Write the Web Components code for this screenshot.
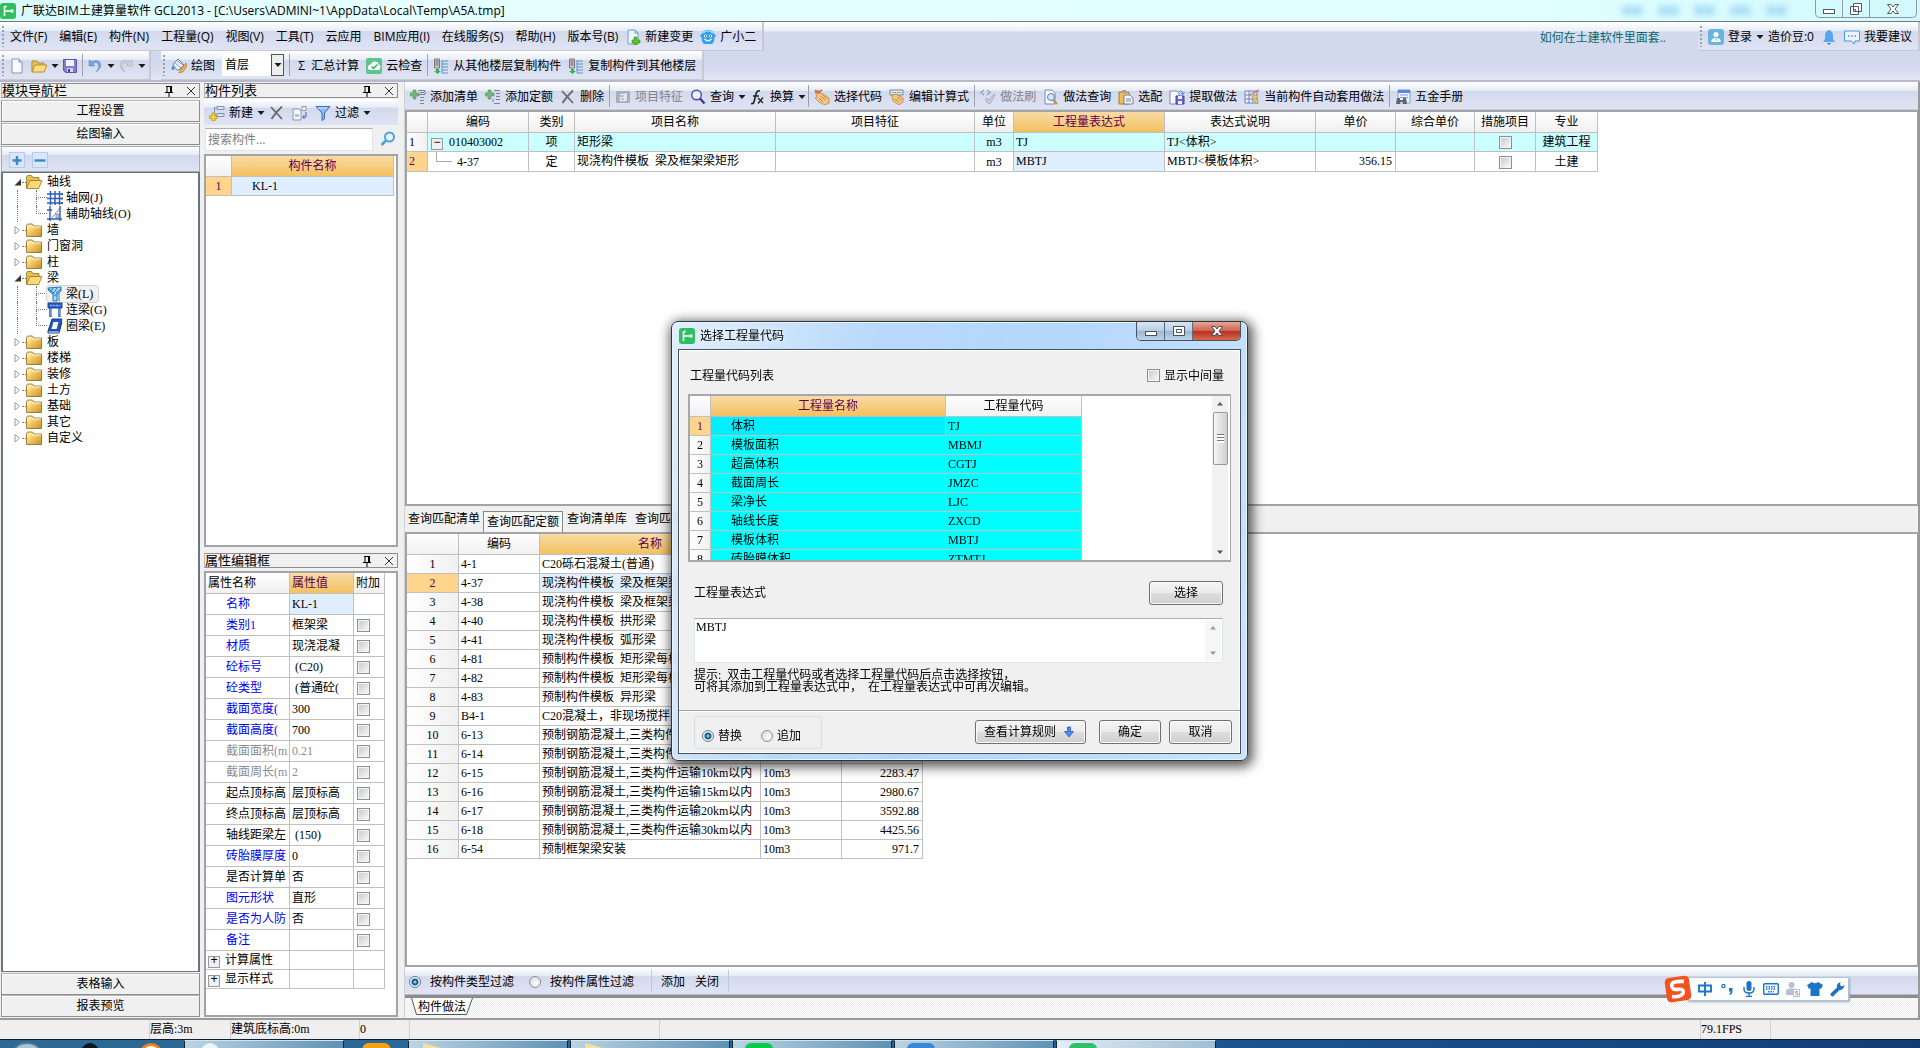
<!DOCTYPE html>
<html lang="zh-CN">
<head>
<meta charset="utf-8">
<title>广联达BIM土建算量软件 GCL2013</title>
<style>
  html, body { margin: 0; height: 100%; }
  body {
    --ui: "Open Sans", "Noto Sans CJK SC", sans-serif;
    --song: "Liberation Serif", "Noto Sans CJK SC", sans-serif;
    --strip: linear-gradient(#ffffff 0, #e6ecf6 32%, #d3d9ec 34%, #dfe4f5 100%);
    --line: #c0c0c0;
    --dark: #8a8a8a;
    font: 12px/16px var(--song);
    color: #000;
    overflow: hidden;
  }
</style>
</head>
<body>
<gcl-app></gcl-app>
<script>
const RESET = `
  *, *::before, *::after { box-sizing: border-box; }
  :host { box-sizing: border-box; }
  button, input, select, textarea { font: inherit; color: inherit; margin: 0; }
  button { background: none; border: 0; padding: 0; white-space: nowrap; }
  input[type=checkbox] { appearance: none; width: 13px; height: 13px; flex: none; border: 1px solid #8e8f8f;
    background: linear-gradient(135deg, #c9cdd2, #f6f6f6) content-box, #f4f4f4; padding: 1px; vertical-align: middle; }
  input[type=radio] { appearance: none; width: 12px; height: 12px; flex: none; border: 1px solid #8e8f8f; border-radius: 50%;
    background: radial-gradient(circle at 65% 65%, #fdfdfd, #cfd3d8); }
  input[type=radio]:checked { background: radial-gradient(circle, #6fd0f5 0 1px, #14608f 2px 3px, #eef2f5 4px); border-color: #6b7a86; }
`;
function element(name, css, view) {
  customElements.define(name, class extends HTMLElement {
    connectedCallback() {
      if (this.shadowRoot) return;
      const t = document.createElement('template');
      t.innerHTML = `<style>${RESET}${css}</style>` + (typeof view === 'function' ? view(this) : view);
      this.attachShadow({ mode: 'open' }).append(t.content.cloneNode(true));
    }
  });
}

/* ---------- icons, all on a 16 x 16 board ---------- */
const ICONS = {
  logo: '<rect width="16" height="16" rx="3" fill="#2fbf5f"/><path d="M4.500 3v10M4.500 8h7M4.500 4.500l2-1.500" stroke="#fff" stroke-width="1.600" fill="none"/><rect x="10.500" y="6.500" width="3" height="3" fill="#fff"/>',
  docplus: '<path d="M3 1h7l3 3v11H3z" fill="#eaf5ff" stroke="#6f9cc8"/><path d="M10 1v3h3" fill="none" stroke="#6f9cc8"/><path d="M9 8h3v3h3v3h-3v2H9v-2H7v-3h2z" fill="#5fc02c" stroke="#3c8f14" stroke-width=".6"/>',
  mascot: '<path d="M8 1q5 0 6 4l2 1-1.500 3Q14 15 11 15H5Q2 15 1.500 9L0 6l2-1q1-4 6-4z" fill="#35a0ea"/><path d="M3 4q5-4 10 0" stroke="#a4e2ff" stroke-width="1.200" fill="none"/><circle cx="5.500" cy="7" r="1.500" fill="#fff"/><circle cx="10.500" cy="7" r="1.500" fill="#fff"/><circle cx="5.700" cy="7" r=".7" fill="#124"/><circle cx="10.300" cy="7" r=".7" fill="#124"/><path d="M4.500 10q3.500 3.500 7 0" fill="none" stroke="#fff" stroke-width="1.200"/>',
  login: '<rect width="16" height="16" rx="3" fill="#6bb4dc"/><circle cx="8" cy="5.500" r="2.500" fill="#fff"/><path d="M3.500 13v-2q1-2 4.500-2t4.500 2v2z" fill="#fff"/><path d="M8 9l1.500 2L8 12z" fill="#6bb4dc"/>',
  bell: '<path d="M8 1q4 1 4 6v3l2 3H2l2-3V7q0-5 4-6z" fill="#5aa5f2"/><path d="M6 14h4q-2 3-4 0z" fill="#2c77c8"/>',
  bubble: '<path d="M.5 2h15v10h-4.500l-1 3-2.500-3h-7z" fill="#eaf4ff" stroke="#4f93dc"/><path d="M4 7h1.500M7.200 7h1.500M10.500 7H12" stroke="#4f93dc" stroke-width="1.500"/>',
  newdoc: '<path d="M3 1h7l3 3v11H3z" fill="#f8fbff" stroke="#8a94a8"/><path d="M10 1v3h3" fill="#d6e0f0" stroke="#8a94a8"/>',
  open: '<path d="M1 14V3h5l1 2h6v3" fill="#e9c060" stroke="#b98a28"/><path d="M1 14l3-7h12l-3 7z" fill="#ffdf82" stroke="#b98a28"/>',
  save: '<path d="M1.500 1.500h13v13h-11l-2-2z" fill="#8080d0" stroke="#5858a8"/><rect x="4" y="2" width="8" height="6" fill="#f4f4ff"/><path d="M5 10h6v4H5z" fill="#d4d4ea"/><path d="M6 11h2v3H6z" fill="#444490"/>',
  undo: '<path d="M2 2v6h6L5.800 6q4-3 5.500.5T9 14q6-4 4.500-8.500T5 3.500z" fill="#7aa2de" stroke="#5a80c0" stroke-width=".5"/>',
  redo: '<path d="M14 2v6H8l2.200-2q-4-3-5.500.5T7 14Q1 10 2.500 5.500T11 3.500z" fill="#d0d3da" stroke="#a4a8b4" stroke-width=".6"/>',
  paint: '<path d="M2 6l5-5 6 6-5 5q-3 1-6-6z" fill="#e8edf4" stroke="#6c7c98"/><path d="M4 5l6 5M6 3l6 4" stroke="#7ea4d6"/><path d="M15 5l-5 6-2 4 4-1 4-6z" fill="#e5b04a" stroke="#a87820" stroke-width=".6"/><path d="M1 8q-1 4 1 4t1-3" fill="#4d86d0"/>',
  cloud: '<rect width="16" height="16" rx="2" fill="#5dc48c"/><path d="M4 12q-3-1-2-3.500t3-2q1-3 4-3t3.500 3q2.500.5 2 3T12 12z" fill="#fff"/><path d="M5.500 8.500l2 2 4-4" stroke="#39a86c" stroke-width="1.500" fill="none"/>',
  copyfloor: '<path d="M1.500 1h5v9h-5z" fill="#d5d5d5" stroke="#777"/><path d="M2.500 3h3M2.500 5h3M2.500 7h3" stroke="#555"/><path d="M9 2v13M9 3h6M9 6h6M9 9h6M9 12h6M9 15h6" stroke="#5d92cc"/><path d="M3 11h3v2h2l-3.500 3L1 13h2z" fill="#34b554"/>',
  add1: '<path d="M3 1h3v3h3v3H6v3H3V7H0V4h3z" fill="#73b878" stroke="#4c8e52" stroke-width=".5"/><path d="M8 1.500h7v4H8M10 3.500h4M10 8.500h4M10 11.500h4M10 14.500h4" stroke="#7d8590" fill="none"/>',
  add2: '<path d="M3 1h3v3h3v3H6v3H3V7H0V4h3z" fill="#73b878" stroke="#4c8e52" stroke-width=".5"/><path d="M9 1.500h6M11 4.500h4M11 7.500h4M11 10.500h4M9 14.500h6M8 13v-3" stroke="#7d8590" fill="none"/>',
  del: '<path d="M2 2l11 12M13 1.500Q7 7 2.500 14" stroke="#6a6a6a" stroke-width="1.800" fill="none"/>',
  feature: '<rect x="1" y="2" width="14" height="12" rx="1" fill="#a8adb9"/><path d="M5 5.500h4.500v6H5.500V8.500h4M11 4v8" stroke="#e8eaf0" stroke-width="1.500" fill="none"/>',
  search: '<circle cx="6.500" cy="6" r="4.800" fill="#eef3ff" stroke="#4a4aa8" stroke-width="1.400"/><path d="M10 9.500l4.500 5" stroke="#3c3c94" stroke-width="2.400"/>',
  fx: '<path d="M10 2q-3-1-4 3l-2 8q-.5 2-3 1.500M3 7h6" stroke="#222" fill="none" stroke-width="1.600"/><path d="M8 9l5 5M13 8.500l-5 6" stroke="#222" stroke-width="1.300"/>',
  hand: '<path d="M1 2l3-1 1 3 4 1 6 4v5l-4 2-6-3-4-4 2-1z" fill="#f2c684" stroke="#b07a30" stroke-width=".7"/><path d="M5 9l4 4M7 7l4 4M9 6l4 4" stroke="#b07a30" stroke-width=".8"/><path d="M1 1l3 3 4-3" stroke="#e05a4a" stroke-width="1.600" fill="none"/>',
  handcalc: '<path d="M1 1h13v5H1z" fill="#e4e8f0" stroke="#7a8296"/><path d="M3 3.500h9" stroke="#7a8296" stroke-dasharray="1.500 1"/><path d="M3 6l4-1 7 4v4l-4 3-6-4z" fill="#f2c684" stroke="#b07a30" stroke-width=".7"/><path d="M6 10l4 3M8 8l4 3" stroke="#b07a30" stroke-width=".8"/>',
  brush: '<path d="M4 1L1 3.500 4 6M7 1l3 2.500L7 6" fill="none" stroke="#9aa0ac" stroke-width="1.300"/><path d="M14 5l-5 6-3-2v4l4 2 5-9z" fill="#c9ccd4" stroke="#9aa0ac" stroke-width=".7"/>',
  docfind: '<path d="M2 1h7l3 3v11H2z" fill="#f6f9ff" stroke="#7b8aa8"/><circle cx="8" cy="8" r="3.500" fill="#cfe6fb" stroke="#5580b8"/><path d="M10 11l4 4" stroke="#d08838" stroke-width="2"/>',
  clip: '<path d="M1 3h10v12H1z" fill="#efbc55" stroke="#aa7a1c"/><path d="M4 1h4v3H4z" fill="#9aa0ac"/><path d="M6 6h6l3 3v6H6z" fill="#f8faff" stroke="#7080a0"/><path d="M8 10h5M8 12h5" stroke="#7080a0"/>',
  extract: '<path d="M1 2h7l2 2v11H1z" fill="#f6f9ff" stroke="#7b8aa8"/><path d="M7 7h8v8H7z" fill="#6868c8" stroke="#44449c"/><path d="M9 7h4v3H9zM9 12h4v3H9z" fill="#eef"/><path d="M10 3q3-3 4 2M12 4l2 1.500L15.500 3" stroke="#4d86d0" fill="none"/>',
  autogrid: '<path d="M1 2h12v12H1zM1 6h12M1 10h12M5 2v12M9 2v12" fill="#eef2ff" stroke="#6b80c4"/><path d="M6 5l2-1 6 8v3l-2-1z" fill="#f1cd62" stroke="#a8801c" stroke-width=".6"/><path d="M10 4l5-3" stroke="#e05a4a" stroke-width="1.400"/>',
  manual: '<path d="M3 1h12v13H3z" fill="#eef4ff" stroke="#88a0d0"/><path d="M3 1h12v3H3z" fill="#5b88e0"/><path d="M5 6h8M5 8.500h8" stroke="#88a0d0"/><path d="M2 9h3v2h3V9h3l1 6H8v-2H5v2H1z" fill="#5a6672"/>',
  newitem: '<path d="M8 1.500h7v3H8zM8 8.500h7v3H8z" fill="#dde5f2" stroke="#7d93b4"/><path d="M5.500 2v8M5.500 3H8M5.500 10H8" stroke="#7d93b4"/><path d="M3 8h3v3h2v2.500H6V16H3v-2.500H0V11h3z" fill="#f5d548" stroke="#b08a10" stroke-width=".7"/>',
  copyto: '<path d="M1 4h6l2 2v9H1z" fill="#f4f7fb" stroke="#8a96ac"/><path d="M3 9h4v3H3z" fill="#b8c0d0"/><path d="M10 1.500h4v4h-4z" fill="#f4f7fb" stroke="#8a96ac"/><path d="M14 7v5h-3M12.500 10L10.500 12l2 2" stroke="#4a5cb8" fill="none"/>',
  filter: '<path d="M1 1.500h14L9.500 8v6L7 15.500V8z" fill="#8cb8f0" stroke="#3f6cc0"/><path d="M3 3h9" stroke="#d6e8ff"/>',
  find: '<circle cx="9.500" cy="6" r="4.500" fill="none" stroke="#4aa3dc" stroke-width="2"/><path d="M6 9.500L1.500 14" stroke="#4aa3dc" stroke-width="2.600"/>',
  plus: '<rect x=".5" y=".5" width="15" height="15" fill="#d9e6fb" stroke="#b7caec"/><path d="M8 4v9M3.500 8.500h9" stroke="#3a8ac8" stroke-width="2.400"/>',
  minus: '<rect x=".5" y=".5" width="15" height="15" fill="#d9e6fb" stroke="#b7caec"/><path d="M2.500 8.500h11" stroke="#3a8ac8" stroke-width="2.400"/>',
  folder: '<path d="M.5 14.500v-11l1-1.500h5l1.500 2h7.500v10.500z" fill="url(#fg)" stroke="#8a6a1c" stroke-width=".8"/><path d="M1 5h14" stroke="#fff2b8"/><defs><linearGradient id="fg" x2="1" y2="1"><stop offset=".2" stop-color="#ffe596"/><stop offset="1" stop-color="#cf8c18"/></linearGradient></defs>',
  folderopen: '<path d="M.5 14V3l1-1.500h4L7 3.500h6V7" fill="#e8bd52" stroke="#94701c" stroke-width=".8"/><path d="M.5 14.500L4 6.500h12l-3.500 8z" fill="#ffdb78" stroke="#94701c" stroke-width=".8"/>',
  axisgrid: '<path d="M3.500 1v14M8 1v14M12.500 1v14M0 4h14M0 8.500h14M0 13h14" stroke="#2c5fc0" stroke-width="1.500"/><path d="M14 3h2v2h-2zM14 7.500h2v2h-2zM14 12h2v2h-2z" fill="#2c5fc0"/>',
  axisaux: '<path d="M3 0v15M13 0v15M0 4h5M0 13h15" stroke="#2c5fc0" stroke-width="1.400"/><path d="M4 13L14 1" stroke="#2c5fc0" stroke-dasharray="2 1"/><path d="M9 8h3v4H9z" fill="#c8cede" stroke="#5a6a90" stroke-width=".7"/>',
  beam: '<path d="M1 2l13-1v4l-4 3v7H6V8L2 5z" fill="#a9d4f4" stroke="#2277bb"/><path d="M2 3l5 5M6 2l-2 4M10 2L6 8M14 3l-5 4M7 10l3-2M12 7v8" stroke="#2277bb"/>',
  linkbeam: '<path d="M1 1h14v5H1z" fill="#2f62c4" stroke="#1c3f94"/><path d="M3 3.500h10" stroke="#9cc0f4" stroke-dasharray="2 1"/><path d="M3.500 6v9M12.500 6v9" stroke="#2f62c4" stroke-width="2.600"/><path d="M4 7v7M13 7v7" stroke="#a9c6f2"/>',
  ringbeam: '<path d="M5 1h10l-3 12H1z" fill="#2458c0" stroke="#163c90"/><path d="M6.500 4h5l-2 7h-5z" fill="#fff"/><path d="M1 13v2h11l3-11" fill="none" stroke="#163c90"/>',
  pin: '<path d="M5 3.500h6M6 3v6M9.500 3v6M10.500 3v6M4 9.500h8M8 10v4" stroke="#000" fill="none"/>',
  close: '<path d="M4 4l8 8M12 4l-8 8" stroke="#333"/>',
  caret: '<path d="M4.500 6h7L8 10z" fill="#1a1a1a"/>',
  up: '<path d="M5 9.500h6L8 6z" fill="#555"/>',
  down: '<path d="M5 6.500h6L8 10z" fill="#555"/>',
  arrowblue: '<path d="M6.500 3h3v4.500h3L8 13 3.500 7.500h3z" fill="#4a8cf0" stroke="#2a56b8" stroke-width=".8"/>',
  sogou: '<g transform="rotate(-8 8 8)"><rect x="1" y="1" width="14" height="14" rx="2.500" fill="#f4511c"/><path d="M12 4.200Q5 2.800 4.700 5.500T8 8.200t2.500 2.600Q9 13 4 11.800" stroke="#fff" stroke-width="2.100" fill="none"/></g>',
  zhong: '<path d="M2 4.500h12v6H2zM8 1v14" stroke="#1d74c4" stroke-width="1.900" fill="none"/>',
  punct: '<circle cx="4.500" cy="5" r="1.600" fill="none" stroke="#1d74c4" stroke-width="1.200"/><path d="M10 7h3.500v3q0 3-3 4v-1.500q1.500-1 1.300-2H10z" fill="#1d74c4"/>',
  mic: '<rect x="5.500" y="0" width="5" height="10" rx="2.500" fill="#1d74c4"/><path d="M3 6v2q0 4 5 4t5-4V6M8 12v4M5 15.500h6" stroke="#1d74c4" stroke-width="1.400" fill="none"/>',
  keys: '<rect x=".7" y="2.700" width="14.600" height="10.600" rx="1" fill="none" stroke="#1d74c4" stroke-width="1.400"/><path d="M3 5.700h10M3 8h10M5 10.800h6" stroke="#1d74c4" stroke-width="1.500" stroke-dasharray="1.500 1"/>',
  person: '<circle cx="6.500" cy="4" r="3" fill="#b9c0d4"/><path d="M1 14V9l3-1.500h5L12 9v5z" fill="#b9c0d4"/><rect x="8.500" y="8.500" width="6" height="7" fill="#fff" stroke="#b9c0d4"/><path d="M13 10.500h-2.500v1.500H13v2h-2.500" stroke="#9ca6c0" fill="none"/>',
  shirt: '<path d="M5 1q3 2.500 6 0l5 3-2 4-1.500-.8V15h-9V7.200L2 8 0 4z" fill="#1d74c4"/>',
  wrench: '<path d="M1.500 12.500L8 6.500Q7 2.500 11.500 1L11 4l2 1.500L15.500 4Q15 9 10.500 9l-6.500 6.500Q1 15 1.500 12.500z" fill="#1d74c4"/>'
};
element('gcl-icon', `
  :host { display: inline-block; width: 16px; height: 16px; flex: none; }
  :host([small]) { width: 8px; height: 8px; }
  :host([large]) { width: 28px; height: 28px; }
  svg { display: block; width: 100%; height: 100%; }
`, h => `<svg viewBox="${h.hasAttribute('small') ? '4 4 8 8' : '0 0 16 16'}" aria-hidden="true">${ICONS[h.getAttribute('name')]}</svg>`);

/* ---------- tool strips ---------- */
element('tool-strip', `
  :host { display: flex; align-items: center; gap: 7px; padding: 0 6px; background: var(--strip); font-family: var(--ui); }
  :host([grip])::before { content: ""; width: 2px; height: 21px; margin-left: -4px; margin-right: -1px;
    background: repeating-linear-gradient(#9aa0b0 0 2px, transparent 2px 4px); }
`, '<slot></slot>');
element('tool-sep', ':host { display: block; width: 1px; height: 22px; background: #9a9eae; margin: 0 -2px; }', '');
element('tool-item', `
  :host { display: block; flex: none; }
  :host([off]) { color: #82838c; }
  :host([drop]) { margin-right: -3px; }
  button { display: flex; align-items: center; gap: 4px; height: 20px; margin-top: 2px; }
`, h => `<button type="button" ${h.hasAttribute('off') ? 'disabled style="color:inherit"' : ''} aria-label="${h.getAttribute('label') || h.textContent.trim()}">
  ${h.getAttribute('icon') ? `<gcl-icon name="${h.getAttribute('icon')}"></gcl-icon>` : ''}
  <slot></slot>${h.hasAttribute('drop') ? '<gcl-icon name="caret" small></gcl-icon>' : ''}</button>`);

/* ---------- title bar ---------- */
element('window-title', `
  :host { display: flex; align-items: stretch; height: 22px; background: linear-gradient(90deg, #d8fbfd, #e6ffff 20%, #e0ffff 80%, #d2f9fd);
    border-bottom: 1px solid #77797c; font-family: var(--ui); }
  .name { display: flex; align-items: center; gap: 5px; flex: 1; }
  .ghost { display: flex; align-items: center; gap: 15px; margin-right: 28px; filter: blur(3px); }
  .ghost i { width: 21px; height: 9px; background: #a9dcf6; }
  .ctl { display: flex; height: 18px; margin-right: 3px; border: 1px solid #8b9ba0; border-top: 0; border-radius: 0 0 5px 5px; }
  .ctl button { width: 27px; display: grid; place-items: center; border-right: 1px solid #8b9ba0; }
  .ctl button:last-child { width: 46px; border: 0; }
  svg { width: 14px; height: 14px; fill: #fff; stroke: #4e5a60; }
`, `<div class="name"><gcl-icon name="logo"></gcl-icon><slot></slot></div>
  <div class="ghost" aria-hidden="true"><i></i><i></i><i></i><i></i><i></i></div>
  <div class="ctl">
    <button aria-label="最小化"><svg viewBox="0 0 14 14"><rect x="1.500" y="7.500" width="11" height="4"/></svg></button>
    <button aria-label="还原"><svg viewBox="0 0 14 14"><path d="M4.500 1.500h8v8h-8zM1.500 4.500h8v8h-8z"/><path d="M4.500 7.500h2v2h-2z"/></svg></button>
    <button aria-label="关闭"><svg viewBox="0 0 14 14"><path d="M1.500 2.500h3.500l2 2.500 2-2.500h3.500L9 7l3.500 4.500H9L7 9l-2 2.500H1.500L5 7z"/></svg></button>
  </div>`);

/* ---------- menu and main tools ---------- */
element('menu-area', `
  :host { display: block; background: linear-gradient(#fff 0, #e9eef6 9px, #d3d9ec 10px, #d3d9ec 45px, #e1e6f5 100%); border-bottom: 2px solid #b6b9cd; font-family: var(--ui); }
  .row { display: flex; height: 29px; align-items: stretch; }
  tool-strip { border-right: 2px solid #c8c9d0; border-bottom: 1px solid #c8c9d0; }
  tool-strip.file { gap: 6px; }
  nav { display: flex; gap: 12px; }
  .grow { flex: 1; }
  a { align-self: center; color: #0b6b70; text-decoration: none; margin-right: 32px; padding-top: 2px; }
  .pick { display: grid; width: 62px; height: 22px; background: #fff; }
  .pick > * { grid-area: 1/1; }
  select { appearance: none; border: 0; background: none; padding: 0 3px; border-radius: 0; width: 100%; }
  .pick span { justify-self: end; width: 13px; border: 1px solid #555; background: #eee; display: grid; place-items: center; pointer-events: none; }
`, `<div class="row">
    <tool-strip grip>
      <nav>${['文件(F)', '编辑(E)', '构件(N)', '工程量(Q)', '视图(V)', '工具(T)', '云应用', 'BIM应用(I)', '在线服务(S)', '帮助(H)', '版本号(B)'].map(t => `<tool-item>${t}</tool-item>`).join('')}</nav>
      <tool-item icon="docplus">新建变更</tool-item><tool-item icon="mascot">广小二</tool-item>
    </tool-strip>
    <div class="grow"></div>
    <a href="#help">如何在土建软件里面套..</a>
    <tool-strip grip>
      <tool-item icon="login" drop>登录</tool-item><tool-item>造价豆:0</tool-item>
      <tool-item icon="bell" label="消息"></tool-item><tool-item icon="bubble">我要建议</tool-item>
    </tool-strip>
  </div>
  <div class="row">
    <tool-strip grip class="file">
      <tool-item icon="newdoc" label="新建"></tool-item><tool-item icon="open" label="打开" drop></tool-item>
      <tool-item icon="save" label="保存"></tool-item><tool-sep></tool-sep>
      <tool-item icon="undo" label="撤销" drop></tool-item><tool-item icon="redo" label="恢复" drop off></tool-item>
    </tool-strip>
    <tool-strip grip style="margin-left:10px">
      <tool-item icon="paint">绘图</tool-item>
      <label class="pick"><select aria-label="楼层"><option>首层</option></select><span><gcl-icon name="caret" small></gcl-icon></span></label>
      <tool-sep></tool-sep>
      <tool-item>&nbsp;Σ&nbsp; 汇总计算</tool-item><tool-item icon="cloud">云检查</tool-item><tool-sep></tool-sep>
      <tool-item icon="copyfloor">从其他楼层复制构件</tool-item><tool-item icon="copyfloor">复制构件到其他楼层</tool-item>
    </tool-strip>
  </div>`);

/* ---------- dock caption and wide buttons ---------- */
element('dock-caption', `
  :host { display: flex; align-items: center; height: 15px; border: 1px solid #8d8d8d; border-left-color: #b9b9b9; background: #f0f0f0; font-size: 13px; line-height: 13px; flex: none; }
  span { flex: 1; white-space: nowrap; }
  button { width: 16px; height: 13px; margin-right: 6px; overflow: hidden; }
  button:last-child { margin-right: 0; }
  gcl-icon { display: block; margin-top: -1px; }
`, '<span><slot></slot></span><button aria-label="固定"><gcl-icon name="pin"></gcl-icon></button><button aria-label="关闭"><gcl-icon name="close"></gcl-icon></button>');
element('nav-button', `
  :host { display: block; flex: none; height: 22px; }
  button { width: 100%; height: 100%; background: #f0f0f0; border: 1px solid #8e8e8e; border-top-color: #b5b5b5; box-shadow: inset 1px 1px #fff; }
`, '<button type="button"><slot></slot></button>');

/* ---------- navigation tree ---------- */
element('tree-node', `
  :host { display: flex; align-items: center; height: 16px; padding-left: 10px; white-space: nowrap; }
  svg { width: 9px; height: 10px; flex: none; }
  .dots { width: 4px; border-top: 1px dotted #777; }
  .label { padding-left: 5px; }
  .g { width: 19px; height: 16px; border-left: 1px dotted #777; margin-left: 4px; }
  .e { width: 11px; height: 16px; flex: none; display: grid; grid-template-rows: 8px 8px; }
  .e i { border-left: 1px dotted #777; }
  .e i:first-child { border-bottom: 1px dotted #777; }
  :host([last]) .e i:last-child { border: 0; }
  .leaf { display: flex; align-items: center; height: 16px; padding-right: 5px; border-radius: 3px; }
  :host([current]) .leaf { background: #f1f1f1; box-shadow: 0 0 0 1px #d5d5d5; }
`, h => h.hasAttribute('leaf')
  ? `<span class="g"></span><span class="e"><i></i><i></i></span><span class="leaf"><gcl-icon name="${h.getAttribute('leaf')}"></gcl-icon><span class="label" style="padding-left:3px"><slot></slot></span></span>`
  : `<svg viewBox="0 0 9 10">${h.hasAttribute('open') ? '<path d="M8 2v6.500H1.500z" fill="#333"/>' : '<path d="M2 1.500v7.500L6.500 5z" fill="#fff" stroke="#999"/>'}</svg>
     <span class="dots"></span><gcl-icon name="${h.hasAttribute('open') ? 'folderopen' : 'folder'}"></gcl-icon><span class="label"><slot></slot></span>`);
element('module-nav', `
  :host { display: flex; flex-direction: column; width: 200px; flex: none; padding: 1px 0 1px 1px; }
  nav-button { margin-top: 1px; }
  .first { margin-top: 2px; }
  .last { margin-top: 0; }
  tool-strip { height: 26px; margin-top: 1px; border: 1px solid #a9a9a9; padding-left: 7px; }
  .tree { flex: 1; background: #fff; border: 1px solid #6c7480; border-width: 1px 2px 1px 2px; padding-top: 1px; overflow: hidden; }
`, `<dock-caption>模块导航栏</dock-caption>
  <nav-button class="first">工程设置</nav-button><nav-button>绘图输入</nav-button>
  <tool-strip><tool-item icon="plus" label="展开"></tool-item><tool-item icon="minus" label="折叠"></tool-item></tool-strip>
  <div class="tree" role="tree">
    <tree-node open>轴线</tree-node><tree-node leaf="axisgrid">轴网(J)</tree-node><tree-node leaf="axisaux" last>辅助轴线(O)</tree-node>
    <tree-node>墙</tree-node><tree-node>门窗洞</tree-node><tree-node>柱</tree-node>
    <tree-node open>梁</tree-node><tree-node leaf="beam" current>梁(L)</tree-node><tree-node leaf="linkbeam">连梁(G)</tree-node><tree-node leaf="ringbeam" last>圈梁(E)</tree-node>
    ${['板', '楼梯', '装修', '土方', '基础', '其它', '自定义'].map(t => `<tree-node>${t}</tree-node>`).join('')}
  </div>
  <nav-button>表格输入</nav-button><nav-button class="last">报表预览</nav-button>`);

/* ---------- data grids ---------- */
const c = (t, k = '') => ({ t, k });
const esc = s => s.replace(/</g, '&lt;');
const tick = name => ({ html: `<input type="checkbox" aria-label="${name}">`, k: 'mid' });
const carry = '预制钢筋混凝土,三类构件运输';
const quota = [
  ['4-1', 'C20砾石混凝土(普通)', '10m3', '2206.35'], ['4-37', '现浇构件模板  梁及框架梁矩形', 'm3', '356.15'],
  ['4-38', '现浇构件模板  梁及框架梁异形', 'm3', '402.18'], ['4-40', '现浇构件模板  拱形梁', 'm3', '618.40'],
  ['4-41', '现浇构件模板  弧形梁', 'm3', '571.26'], ['4-81', '预制构件模板  矩形梁每根', 'm3', '188.72'],
  ['4-82', '预制构件模板  矩形梁每根', 'm3', '171.05'], ['4-83', '预制构件模板  异形梁', 'm3', '214.33'],
  ['B4-1', 'C20混凝土，非现场搅拌', 'm3', '298.50'], ['6-13', carry + '1km以内', '10m3', '1209.82'],
  ['6-14', carry + '5km以内', '10m3', '1690.05'], ['6-15', carry + '10km以内', '10m3', '2283.47'],
  ['6-16', carry + '15km以内', '10m3', '2980.67'], ['6-17', carry + '20km以内', '10m3', '3592.88'],
  ['6-18', carry + '30km以内', '10m3', '4425.56'], ['6-54', '预制框架梁安装', '10m3', '971.7']
];
const codes = [['体积', 'TJ'], ['模板面积', 'MBMJ'], ['超高体积', 'CGTJ'], ['截面周长', 'JMZC'], ['梁净长', 'LJC'], ['轴线长度', 'ZXCD'], ['模板体积', 'MBTJ'], ['砖胎膜体积', 'ZTMTJ']];
const props = [
  ['名称', 'KL-1', 'b', 1], ['类别1', '框架梁', 'b'], ['材质', '现浇混凝', 'b'], ['砼标号', ' (C20)', 'b'], ['砼类型', ' (普通砼(', 'b'],
  ['截面宽度(', '300', 'b'], ['截面高度(', '700', 'b'], ['截面面积(m', '0.21', 'g'], ['截面周长(m', '2', 'g'],
  ['起点顶标高', '层顶标高', ''], ['终点顶标高', '层顶标高', ''], ['轴线距梁左', ' (150)', ''], ['砖胎膜厚度', '0', 'b'],
  ['是否计算单', '否', ''], ['图元形状', '直形', 'b'], ['是否为人防', '否', 'b'], ['备注', '', 'b']
];
const GRIDS = {
  works: {
    w: [21, 101, 46, 201, 199, 39, 151, 151, 80, 79, 61, 62], hot: 6,
    head: ['', '编码', '类别', '项目名称', '项目特征', '单位', '工程量表达式', '表达式说明', '单价', '综合单价', '措施项目', '专业'],
    rows: [
      { k: 'aqua', cells: [c('1', 'no left'), { html: '<span class="box">−</span>010403002', k: 'code' }, c('项', 'mid'), c('矩形梁'), c(''), c('m3', 'mid'), c('TJ'), c('TJ<体积>'), c(''), c(''), tick('措施项目 1'), c('建筑工程', 'mid')] },
      { cells: [c('2', 'no left cur'), { html: '<span class="branch"></span>4-37', k: 'code' }, c('定', 'mid'), c('现浇构件模板  梁及框架梁矩形'), c(''), c('m3', 'mid'), c('MBTJ', 'sel'), c('MBTJ<模板体积>'), c('356.15', 'num'), c(''), tick('措施项目 2'), c('土建', 'mid')] }
    ]
  },
  quota: {
    w: [52, 81, 221, 81, 81], hot: 2, head: ['', '编码', '名称', '单位', '单价'],
    rows: quota.map((r, i) => ({ cells: [c(String(i + 1), 'no' + (i === 1 ? ' cur' : '')), c(r[0]), c(r[1], i === 1 ? 'sel' : ''), c(r[2]), c(r[3], 'num')] }))
  },
  members: { w: [26, 162], hot: 1, head: ['', '构件名称'], rows: [{ cells: [c('1', 'no cur'), c('KL-1', 'sel in')] }] },
  codes: {
    w: [21, 235, 136], hot: 1, head: ['', '工程量名称', '工程量代码'],
    rows: codes.map((r, i) => ({ k: 'cyan', cells: [c(String(i + 1), 'no' + (i ? '' : ' cur')), c(r[0], 'in' + (i ? '' : ' first')), c(r[1])] }))
  },
  props: {
    w: [84, 64, 31], hot: 1, leftHead: true, head: ['属性名称', '属性值', '附加'],
    rows: props.map(p => ({ k: 'tall', cells: [c(p[0], 'in ' + p[2]), c(p[1], (p[3] ? 'sel ' : '') + (p[2] === 'g' ? 'g' : '')), p[3] ? c('') : tick('附加 ' + p[0])] }))
      .concat(['计算属性', '显示样式'].map(t => ({ cells: [{ html: `<span class="box">+</span>${t}`, k: 'group' }, c(''), c('')] })))
  }
};
element('data-grid', `
  :host { display: block; }
  table { table-layout: fixed; border-collapse: separate; border-spacing: 0; }
  th, td { border: solid var(--line); border-width: 0 1px 1px 0; overflow: hidden; white-space: nowrap; font-weight: 400; padding: 0; line-height: 17px; }
  th { height: 21px; background: linear-gradient(#fff, #f0f0f0); text-align: center; }
  th.hot { background: linear-gradient(#f9dba4, #f2c161); color: #5c0050; }
  table.lh th { text-align: left; padding-left: 2px; }
  td { height: 19px; text-align: left; padding-left: 2px; background: #fff; white-space: pre; }
  tr.tall td { height: 21px; }
  tr.aqua td { background: #ccffff; }
  tr.cyan td { background: #00ffff; }
  tr.cyan td.first { background: #00efff; }
  tr td.no { background: linear-gradient(90deg, #fff, #f0f0f0); text-align: center; padding: 0; }
  tr td.no.left { text-align: left; padding-left: 2px; }
  tr td.no.cur { background: #ffd48c; color: #5c0050; }
  td.sel { background: #e0efff; }
  td.mid { text-align: center; padding: 0; line-height: 14px; }
  tr.tall td.mid { text-align: left; padding-left: 3px; }
  td.num { text-align: right; padding: 0 3px 0 0; }
  td.in { padding-left: 20px; }
  .b { color: #0000f0; } .g { color: #8c8c8c; }
  .box { display: inline-block; width: 12px; height: 12px; border: 1px solid #999; background: #f0f0f0; font: 12px/9px "Liberation Mono", monospace; text-align: center; color: #000; vertical-align: 0; }
  td.code .box { margin: 0 6px 0 1px; }
  td.group .box { margin: 0 5px 0 0; }
  .branch { display: inline-block; width: 16px; height: 10px; border: solid #aaa; border-width: 0 0 1px 1px; margin: 0 5px 0 6px; vertical-align: 4px; }
`, h => {
  const g = GRIDS[h.getAttribute('source')];
  return `<table class="${g.leftHead ? 'lh' : ''}" style="width:${g.w.reduce((a, b) => a + b)}px"><colgroup>${g.w.map(w => `<col style="width:${w}px">`).join('')}</colgroup>
    <thead><tr>${g.head.map((t, i) => `<th class="${i === g.hot ? 'hot' : ''}">${t}</th>`).join('')}</tr></thead>
    <tbody>${g.rows.map(r => `<tr class="${r.k || ''}">${r.cells.map(x => `<td class="${x.k}">${x.html || esc(x.t)}</td>`).join('')}</tr>`).join('')}</tbody></table>`;
});

/* ---------- member list and properties ---------- */
element('member-dock', `
  :host { display: flex; flex-direction: column; gap: 6px; width: 194px; flex: none; padding: 1px 0; }
  section { flex: 1 1 0; min-height: 0; display: flex; flex-direction: column; }
  tool-strip { height: 26px; margin-top: 1px; padding: 0 5px; }
  .find { display: flex; align-items: center; gap: 7px; height: 24px; margin: 2px 0 3px; }
  .find input { width: 168px; height: 23px; margin-left: 1px; border: 1px solid #e0e4ea; border-top-color: #abadb3; padding: 0 2px; background: #fff; font-family: var(--ui); }
  .find input::placeholder { color: #7d7d7d; opacity: 1; }
  .find button { height: 16px; }
  .box { flex: 1; min-height: 0; background: #fff; border: 2px solid #a2a4a8; overflow: hidden; }
  .box.p { margin-top: 3px; }
`, `<section><dock-caption>构件列表</dock-caption>
    <tool-strip><tool-item icon="newitem" drop>新建</tool-item><tool-item icon="del" label="删除"></tool-item><tool-item icon="copyto" label="复制"></tool-item><tool-item icon="filter" drop>过滤</tool-item></tool-strip>
    <div class="find"><input type="text" placeholder="搜索构件..." aria-label="搜索构件"><button aria-label="搜索"><gcl-icon name="find"></gcl-icon></button></div>
    <div class="box"><data-grid source="members"></data-grid></div></section>
  <section><dock-caption>属性编辑框</dock-caption><div class="box p"><data-grid source="props"></data-grid></div></section>`);

/* ---------- main work area ---------- */
element('work-area', `
  :host { display: flex; flex-direction: column; flex: 1; min-width: 0; margin-left: 2px; border-right: 2px solid #9a9a9a; border-left: 1px solid #d0d0d0; }
  .tools { height: 28px; flex: none; padding: 0 5px; border-bottom: 1px solid #c9cbd6; }
  .pane { min-height: 0; background: #fff; border: solid #a2a4a8; border-width: 2px 1px 2px 2px; overflow: hidden; }
  .pane.top { flex: 397 1 0; } .pane.low { flex: 436 1 0; }
  .tabs { display: flex; align-items: center; height: 26px; flex: none; padding-left: 1px; gap: 2px; }
  .tabs button { height: 18px; padding: 0 1px 0 2px; }
  .tabs button[aria-selected=true] { height: 21px; align-self: flex-end; border: 1px solid #888; border-bottom: 0; padding: 0 3px; background: #f7f7f7; }
  .filter { height: 28px; flex: none; gap: 0; padding: 0 4px; font-family: var(--song); border-bottom: 1px solid #b6b9cd; }
  .filter label { display: flex; align-items: center; gap: 9px; margin-right: 15px; padding-top: 2px; }
  .filter tool-sep { margin: 0 9px; background: #c3c6d6; }
  .filter tool-sep.near { margin-left: 2px; }
  .filter tool-item + tool-item { margin-left: 10px; }
  .sheets { flex: none; height: 23px; border-top: 3px solid #8c8c8c; background: repeating-conic-gradient(#fff 0 25%, #ececec 0 50%) 0 0 / 2px 2px; padding-left: 6px; }
  .sheet { width: 62px; height: 17px; display: grid; place-items: center; }
  .sheet svg { width: 100%; height: 100%; grid-area: 1/1; }
  .sheet button { grid-area: 1/1; line-height: 14px; }
`, `<tool-strip class="tools">
    <tool-item icon="add1">添加清单</tool-item><tool-item icon="add2">添加定额</tool-item><tool-item icon="del">删除</tool-item><tool-sep></tool-sep>
    <tool-item icon="feature" off>项目特征</tool-item><tool-item icon="search" drop>查询</tool-item><tool-item icon="fx" drop>换算</tool-item><tool-sep></tool-sep>
    <tool-item icon="hand">选择代码</tool-item><tool-item icon="handcalc">编辑计算式</tool-item><tool-sep></tool-sep>
    <tool-item icon="brush" off>做法刷</tool-item><tool-item icon="docfind">做法查询</tool-item><tool-item icon="clip">选配</tool-item><tool-item icon="extract">提取做法</tool-item><tool-item icon="autogrid">当前构件自动套用做法</tool-item><tool-sep></tool-sep>
    <tool-item icon="manual">五金手册</tool-item>
  </tool-strip>
  <div class="pane top"><data-grid source="works"></data-grid></div>
  <div class="tabs" role="tablist"><button role="tab">查询匹配清单</button><button role="tab" aria-selected="true">查询匹配定额</button><button role="tab">查询清单库</button><button role="tab" style="margin-left:3px">查询匹配外部清单</button></div>
  <div class="pane low"><data-grid source="quota"></data-grid></div>
  <tool-strip class="filter"><label><input type="radio" name="f" checked>按构件类型过滤</label><label><input type="radio" name="f">按构件属性过滤</label><tool-sep class="near"></tool-sep><tool-item>添加</tool-item><tool-item>关闭</tool-item><tool-sep></tool-sep></tool-strip>
  <div class="sheets"><div class="sheet"><svg viewBox="0 0 62 17" preserveAspectRatio="none"><path d="M.5 0l5 16.500h50L61.500 0" fill="#fff" stroke="#555"/></svg><button>构件做法</button></div></div>`);

/* ---------- status bar and desktop task bar ---------- */
element('status-bar', `
  :host { display: flex; height: 21px; flex: none; background: #f0eeee; border-top: 2px solid #9a9a9a; line-height: 18px; }
  span { border-left: 1px solid #d2d0d0; white-space: nowrap; }
`, `<span style="width:149px;border:0"></span><span style="width:81px">层高:3m</span><span style="width:129px">建筑底标高:0m</span><span style="width:50px">0</span><span style="width:250px"></span><span style="flex:1"></span><span style="width:70px">79.1FPS</span><span style="width:150px"></span>`);
element('task-bar', `
  :host { display: flex; height: 9px; flex: none; overflow: hidden; border-top: 1px solid #0c1e30; background: linear-gradient(90deg, #2c6a94, #256399 50%, #1a5590 65%, #123c74); padding-left: 13px; }
  i { flex: none; height: 20px; }
  .orb { width: 28px; border-radius: 50%; background: #a9c4d4; border: 2px solid #557a90; margin: 2px 40px 0 0; }
  .a { width: 18px; border-radius: 50%; background: #10151a; margin: 3px 41px 0 0; }
  .b { width: 22px; border-radius: 50%; background: #fff; border: 3px solid #f08020; margin: 3px 22px 0 0; }
  .t { width: 160px; margin-right: 2px; border: 1px solid #123; border-top-color: #cfe4f2; background: linear-gradient(90deg, #bcd3e2, #5d92b6); padding-left: 12px; }
  .t svg { width: 28px; height: 18px; display: block; margin-top: 2px; }
  .gap { width: 62px; padding: 3px 15px 0; } .gap svg { width: 31px; height: 18px; display: block; }
  .on { background: linear-gradient(90deg, #e3edf4, #9fbdd2); }
`, `<i class="orb"></i><i class="a"></i><i class="b"></i>
  ${['c', 'gap', 'f', 'f', 'g', 'b', 'on'].map(k => {
    const fill = { c: '#eef4f8', gap: '#f8a010', f: '#f2e2a0', g: '#06cc48', b: '#3a86d8', on: '#30c068' }[k];
    const shape = k === 'f' ? `<path d="M2 0l18 5v12H2z" fill="${fill}"/>` : k === 'c' ? `<circle cx="13" cy="9" r="9" fill="${fill}"/>` : `<rect width="28" height="30" rx="6" fill="${fill}"/>`;
    return `<i class="${k === 'gap' ? 'gap' : 't' + (k === 'on' ? ' on' : '')}"><svg viewBox="0 0 28 18">${shape}</svg></i>`;
  }).join('')}`);

/* ---------- input method bar ---------- */
element('ime-bar', `
  :host { position: absolute; right: 71px; bottom: 45px; display: flex; align-items: center; }
  .bar { display: flex; align-items: center; gap: 6px; height: 24px; width: 162px; margin-left: -5px; padding-left: 9px; background: #fdfeff; border: 1px solid #b3c4d6; box-shadow: 1px 1px 2px #9ab; }
  gcl-icon[large] { z-index: 1; }
`, `<gcl-icon name="sogou" large></gcl-icon><div class="bar">${['zhong', 'punct', 'mic', 'keys', 'person', 'shirt', 'wrench'].map(n => `<gcl-icon name="${n}"></gcl-icon>`).join('')}</div>`);

/* ---------- code picker window ---------- */
element('push-button', `
  :host { display: block; flex: none; height: 24px; }
  button { width: 100%; height: 100%; display: flex; align-items: center; justify-content: center; gap: 5px; border: 1px solid #707070; border-radius: 3px; background: linear-gradient(#f4f4f4, #ebebeb 49%, #dddddd 50%, #cfcfcf); box-shadow: inset 0 0 0 1px #fbfbfb; }
`, '<button type="button"><slot></slot></button>');
element('scroll-rail', `
  :host { display: flex; flex-direction: column; align-items: center; justify-content: space-between; width: 16px; background: #f1f1f1; }
  i { flex: none; width: 15px; height: 53px; border: 1px solid #979797; border-radius: 2px; background: repeating-linear-gradient(#777 0 1px, #fff 1px 3px) center / 7px 9px no-repeat, linear-gradient(90deg, #f5f5f5, #d0d0d2); }
  .fill { flex: 1; }
`, h => `<gcl-icon name="up"></gcl-icon>${h.hasAttribute('thumb') ? '<i></i>' : ''}<span class="fill"></span><gcl-icon name="down"></gcl-icon>`);
element('code-window', `
  :host { position: absolute; left: 671px; top: 321px; width: 577px; }
  .frame { border: 1px solid #30363c; border-radius: 7px; padding: 0 6px 6px; background: linear-gradient(100deg, rgba(222,238,252,.96), rgba(178,214,250,.92) 32%, rgba(172,211,250,.9) 60%, rgba(196,226,254,.92)); backdrop-filter: blur(3px);
    box-shadow: inset 0 0 0 1px #e6f4ff, 2px 3px 12px 3px rgba(0,0,0,.65); }
  header { display: flex; height: 27px; font-family: var(--ui); }
  .cap { display: flex; align-items: center; gap: 5px; flex: 1; padding-left: 1px; text-shadow: 0 0 6px #fff; }
  .ctl { display: flex; height: 19px; border: 1px solid #47525f; border-top: 0; border-radius: 0 0 5px 5px; overflow: hidden; }
  .ctl button { width: 28px; display: grid; place-items: center; border-right: 1px solid #5d6c7c; background: linear-gradient(#d6e6f5, #b9cee2 48%, #9db6cf 50%, #bcd4ea); }
  .ctl button:last-child { width: 47px; border: 0; background: linear-gradient(#e6a698, #cf6350 48%, #b5301c 50%, #d8694c); }
  .ctl svg { width: 14px; height: 14px; fill: #fff; stroke: #44505c; }
  .body { border: 1px solid #48525c; box-shadow: inset 0 0 0 1px #fff; background: #f0f0f0; padding: 0 9px; }
  .line { display: flex; align-items: center; justify-content: space-between; }
  .l1 { height: 44px; padding: 7px 7px 0 2px; }
  label { display: flex; align-items: center; gap: 4px; }
  .list { display: flex; justify-content: space-between; height: 168px; border: 2px solid #a6a8ae; border-right-width: 1px; padding-right: 2px; background: #fff; overflow: hidden; }
  .l2 { height: 56px; padding: 6px 8px 0 6px; }
  .expr { display: flex; height: 45px; margin: 0 8px 6px 6px; border: 1px solid #dfe3ea; border-top-color: #abadb3; background: #fff; padding: 1px; }
  textarea { flex: 1; border: 0; resize: none; padding: 0; line-height: 14px; background: none; overflow: hidden; outline: 0; }
  .expr scroll-rail { opacity: .6; }
  p { margin: 0; padding: 0 6px 14px; line-height: 12px; height: 41px; white-space: pre; }
  footer { display: flex; align-items: center; margin: 0 -9px; padding: 0 8px 0 15px; height: 43px; border-top: 1px solid #a2a2a2; box-shadow: inset 0 1px #fff; }
  fieldset { display: flex; gap: 19px; align-items: flex-end; width: 128px; height: 33px; margin: 0 auto 0 0; padding: 0 7px 4px; border: 1px solid #d5dfe5; border-radius: 3px; }
`, `<div class="frame" role="dialog" aria-label="选择工程量代码">
    <header><div class="cap"><gcl-icon name="logo"></gcl-icon>选择工程量代码</div>
      <div class="ctl"><button aria-label="最小化"><svg viewBox="0 0 14 14"><rect x="1.500" y="7.500" width="11" height="4"/></svg></button><button aria-label="最大化"><svg viewBox="0 0 14 14"><path d="M1.500 2.500h11v9h-11z"/><path d="M4.500 5.500h5v3h-5z"/></svg></button><button aria-label="关闭"><svg viewBox="0 0 14 14"><path d="M1.500 2.500h3.500l2 2.500 2-2.500h3.500L9 7l3.500 4.500H9L7 9l-2 2.500H1.500L5 7z"/></svg></button></div></header>
    <div class="body">
      <div class="line l1"><span>工程量代码列表</span><label><input type="checkbox">显示中间量</label></div>
      <div class="list"><data-grid source="codes"></data-grid><scroll-rail thumb></scroll-rail></div>
      <div class="line l2"><span>工程量表达式</span><push-button style="width:74px">选择</push-button></div>
      <div class="expr"><textarea aria-label="工程量表达式">MBTJ</textarea><scroll-rail></scroll-rail></div>
      <p>提示:  双击工程量代码或者选择工程量代码后点击选择按钮，<br>可将其添加到工程量表达式中，  在工程量表达式中可再次编辑。</p>
      <footer><fieldset><label><input type="radio" name="m" checked>替换</label><label><input type="radio" name="m">追加</label></fieldset>
        <push-button style="width:111px;margin-right:13px">查看计算规则<gcl-icon name="arrowblue"></gcl-icon></push-button><push-button style="width:62px;margin-right:8px">确定</push-button><push-button style="width:63px">取消</push-button></footer>
    </div></div>`);

element('gcl-app', `
  :host { display: flex; flex-direction: column; height: 100vh; position: relative; background: #f0f0f0; }
  main { flex: 1; min-height: 0; display: flex; gap: 4px; }
`, `<window-title>广联达BIM土建算量软件 GCL2013 - [C:\\Users\\ADMINI~1\\AppData\\Local\\Temp\\A5A.tmp]</window-title>
  <menu-area></menu-area>
  <main><module-nav></module-nav><member-dock></member-dock><work-area></work-area></main>
  <status-bar></status-bar><task-bar></task-bar>
  <code-window></code-window><ime-bar></ime-bar>`);
</script>
</body>
</html>
